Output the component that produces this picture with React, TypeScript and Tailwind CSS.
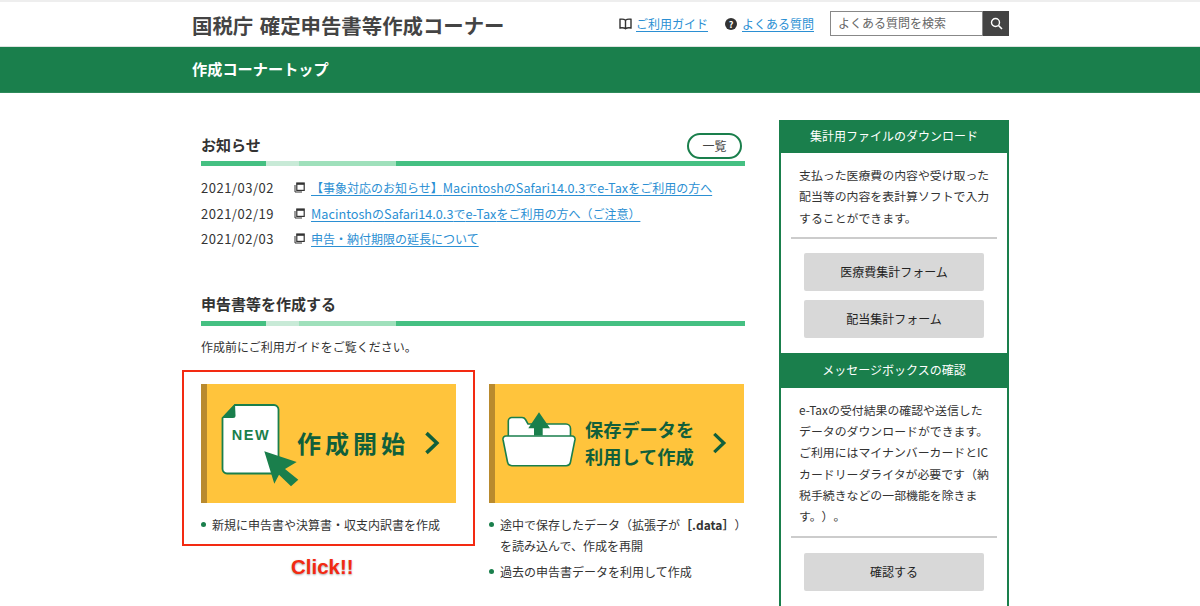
import React from "react";

const F = '"Noto Sans CJK JP", sans-serif';

function Bar() {
  return (
    <div className="flex h-[5px] w-[544px]">
      <div className="w-[65px] bg-[#45c082]" />
      <div className="w-[33px] bg-[#c8ead7]" />
      <div className="w-[97px] bg-[#9fe0bb]" />
      <div className="flex-1 bg-[#45c082]" />
    </div>
  );
}

function WinIcon() {
  return (
    <svg width="11" height="11" viewBox="0 0 11 11" className="shrink-0">
      <path d="M1 3v7h7" fill="none" stroke="#333" strokeWidth="1" />
      <rect x="2.8" y="1" width="7.4" height="7.4" fill="#fff" stroke="#333" strokeWidth="1.2" />
      <rect x="2.8" y="1" width="7.4" height="1.8" fill="#333" />
    </svg>
  );
}

function Lat({ children }: { children: React.ReactNode }) {
  return <span className="text-[12.7px]">{children}</span>;
}

function Notice({ date, children }: { date: string; children: React.ReactNode }) {
  return (
    <div className="flex h-[25.5px] items-center text-[12px] text-[#333]">
      <span className="w-[93px] text-[13px] tracking-[0.5px]">{date}</span>
      <WinIcon />
      <a className="ml-[6px] text-[#2b8fd3] underline underline-offset-2">{children}</a>
    </div>
  );
}

function Chevron({ h }: { h: number }) {
  return (
    <svg width={h * 0.66} height={h} viewBox="0 0 16 24" className="shrink-0">
      <path d="M2.5 2 L13 12 L2.5 22" fill="none" stroke="#115f3b" strokeWidth="3.6" />
    </svg>
  );
}

function Bullet({ children }: { children: React.ReactNode }) {
  return (
    <li className="relative flex text-[12px] leading-[21px] text-[#333]">
      <span className="mr-[6px] mt-[8px] h-[5px] w-[5px] shrink-0 rounded-full bg-[#1a7f4c]" />
      <span>{children}</span>
    </li>
  );
}

function GrayButton({ children }: { children: React.ReactNode }) {
  return (
    <div className="mx-auto flex h-[38px] w-[180px] items-center justify-center rounded-[2px] bg-[#d8d8d8] text-[12px] text-[#222]">
      {children}
    </div>
  );
}

export default function App() {
  return (
    <div className="relative h-[606px] w-[1200px] overflow-hidden bg-white [text-spacing-trim:space-all]" style={{ fontFamily: F }}>
      <div className="h-[2px] bg-[#eeeeee]" />
      <header className="flex h-[45px] items-center border-b border-[#dde3e0] pl-[192px]">
        <h1 className="mt-[2px] w-[427px] text-[20.4px] font-bold [word-spacing:2px] whitespace-nowrap text-[#444]">国税庁 確定申告書等作成コーナー</h1>
        <svg width="13" height="12" viewBox="0 0 13 12" className="mr-[4px]">
          <path d="M6.5 2.2C5 1 3 .9 1 1.3V10c2-.4 4-.3 5.5.8 1.5-1.1 3.5-1.2 5.5-.8V1.3C10 .9 8 1 6.5 2.2Z M6.5 2.2V10.8" fill="none" stroke="#333" strokeWidth="1.4" />
        </svg>
        <a className="w-[89px] text-[12px] text-[#2b8fd3] underline underline-offset-2">ご利用ガイド</a>
        <span className="mr-[5px] flex h-[12px] w-[12px] items-center justify-center rounded-full bg-[#333] text-[9px] leading-none font-bold text-white">?</span>
        <a className="w-[88px] text-[12px] text-[#2b8fd3] underline underline-offset-2">よくある質問</a>
        <div className="mt-[-2px] flex h-[25px] w-[179px]">
          <div className="flex w-[153px] items-center border border-[#888] pl-[7px] text-[12px] text-[#666]">よくある質問を検索</div>
          <div className="flex w-[26px] items-center justify-center bg-[#444]">
            <svg width="13" height="13" viewBox="0 0 13 13">
              <circle cx="5.5" cy="5.5" r="4" fill="none" stroke="#fff" strokeWidth="1.4" />
              <path d="M8.5 8.5 12 12" stroke="#fff" strokeWidth="1.6" />
            </svg>
          </div>
        </div>
      </header>
      <div className="flex h-[46px] items-center border-b border-[#2d8a5a] bg-[#1a7f4c] pb-[2px] pl-[192px] text-[15.2px] font-bold text-white">作成コーナートップ</div>

      <div className="flex items-start pl-[201px]">
        <main className="w-[544px] pt-[40px]">
          <div className="flex h-[25px] items-center justify-between pr-[3px]">
            <h2 className="text-[15px] font-bold text-[#333]">お知らせ</h2>
            <span className="flex h-[26px] w-[55px] items-center justify-center rounded-full border-2 border-[#1a7f4c] text-[12px] text-[#444]">一覧</span>
          </div>
          <div className="mt-[3px]"><Bar /></div>
          <div className="mt-[9px]">
            <Notice date="2021/03/02">【事象対応のお知らせ】<Lat>Macintosh</Lat>の<Lat>Safari14.0.3</Lat>で<Lat>e-Tax</Lat>をご利用の方へ</Notice>
            <Notice date="2021/02/19"><Lat>Macintosh</Lat>の<Lat>Safari14.0.3</Lat>で<Lat>e-Tax</Lat>をご利用の方へ（ご注意）</Notice>
            <Notice date="2021/02/03">申告・納付期限の延長について</Notice>
          </div>

          <div className="mt-[40px] flex h-[25px] items-center">
            <h2 className="text-[15px] font-bold text-[#333]">申告書等を作成する</h2>
          </div>
          <div className="mt-[4px]"><Bar /></div>
          <p className="mt-[11px] text-[12px] leading-[20px] text-[#333]">作成前にご利用ガイドをご覧ください。</p>

          <div className="mt-[27px] flex gap-[33px]">
            <div className="w-[255px]">
              <div className="flex h-[119px] items-center border-l-[6px] border-[#b98a2e] bg-[#ffc43c]">
                <svg width="90" height="90" viewBox="0 0 90 90" className="ml-[8px] shrink-0">
                  <path d="M20 7H59a4.5 4.5 0 0 1 4.5 4.5V71a4.5 4.5 0 0 1-4.5 4.5H12A4.5 4.5 0 0 1 7.5 71V20Z" fill="#fff" stroke="#1a7f4c" strokeWidth="1.8" />
                  <path d="M20 6 L7 20 H18 a2.5 2.5 0 0 0 2.5-2.5Z" fill="#1a7f4c" />
                  <text x="36" y="42" textAnchor="middle" fontSize="14.5" fontWeight="700" letterSpacing="1.5" fill="#1a7f4c" fontFamily='"Liberation Sans", sans-serif'>NEW</text>
                  <path d="M49.3 53.3 81.7 64 70 71 83.3 81.7 76 88.3 64 76.7 59.3 85.7Z" fill="#1a7f4c" />
                </svg>
                <span className="ml-[-8px] text-[24px] font-bold tracking-[4px] whitespace-nowrap text-[#115f3b]">作成開始</span>
                <span className="ml-[15px]"><Chevron h={24} /></span>
              </div>
              <ul className="mt-[11px]">
                <Bullet>新規に申告書や決算書・収支内訳書を作成</Bullet>
              </ul>
            </div>
            <div className="w-[255px]">
              <div className="flex h-[119px] items-center border-l-[6px] border-[#b98a2e] bg-[#ffc43c]">
                <svg width="80" height="60" viewBox="0 0 80 60" className="ml-[5px] mt-[-6px] shrink-0">
                  <path d="M8.3 30V11a3.5 3.5 0 0 1 3.5-3.5H22a4 4 0 0 1 3.5 2L28 14H66a4.5 4.5 0 0 1 4.5 4.5V30Z" fill="#fff" stroke="#1a7f4c" strokeWidth="1.6" />
                  <path d="M6 26H72a3 3 0 0 1 3 3.5L70.5 52a4.5 4.5 0 0 1-4.5 3.7H12A4.5 4.5 0 0 1 7.5 52L3 29.5A3 3 0 0 1 6 26Z" fill="#fff" stroke="#1a7f4c" strokeWidth="1.6" />
                  <path d="M39 2.3 50 18.3H42.700V25.500H34V18.300H28.300Z" fill="#1a7f4c" />
                </svg>
                <span className="ml-[5px] text-[18.2px] leading-[27px] font-bold whitespace-nowrap text-[#115f3b]">保存データを<br />利用して作成</span>
                <span className="ml-[18px]"><Chevron h={22} /></span>
              </div>
              <ul className="mt-[11px] flex flex-col gap-[5px]">
                <Bullet><span className="whitespace-nowrap">途中で保存したデータ（拡張子が<b className="font-bold">［.data］</b>）</span><br />を読み込んで、作成を再開</Bullet>
                <Bullet>過去の申告書データを利用して作成</Bullet>
              </ul>
            </div>
          </div>
        </main>

        <aside className="ml-[34px] mt-[27px] w-[230px] border-x-2 border-[#1a7f4c]">
          <div className="flex h-[33px] items-center justify-center bg-[#1a7f4c] pb-[2px] text-[12px] text-white">集計用ファイルのダウンロード</div>
          <p className="pt-[11px] pl-[18px] text-[11.9px] leading-[21.3px] whitespace-nowrap text-[#333]">支払った医療費の内容や受け取った<br />配当等の内容を表計算ソフトで入力<br />することができます。</p>
          <div className="mx-[10px] mt-[9px] h-[2px] bg-[#cccccc]" />
          <div className="mt-[14px] flex flex-col gap-[9px] pb-[15px]">
            <GrayButton>医療費集計フォーム</GrayButton>
            <GrayButton>配当集計フォーム</GrayButton>
          </div>
          <div className="flex h-[35px] items-center justify-center bg-[#1a7f4c] text-[12px] text-white">メッセージボックスの確認</div>
          <p className="pt-[11px] pl-[18px] text-[11.9px] leading-[21.3px] whitespace-nowrap text-[#333]">e-Taxの受付結果の確認や送信した<br />データのダウンロードができます。<br />ご利用にはマイナンバーカードとIC<br />カードリーダライタが必要です（納<br />税手続きなどの一部機能を除きま<br />す。）。</p>
          <div className="mx-[10px] mt-[9px] h-[2px] bg-[#cccccc]" />
          <div className="mt-[15px] pb-[15px]">
            <GrayButton>確認する</GrayButton>
          </div>
        </aside>
      </div>

      <div className="absolute top-[370px] left-[182px] h-[176px] w-[293px] border-[2.5px] border-[#f32a12]" />
      <span
        className="absolute top-[554px] left-[291px] text-[20.5px] leading-[26px] font-bold text-[#f32a12] [text-shadow:0_1px_2px_rgba(0,0,0,0.35),0_0_2px_#fff]"
        style={{ fontFamily: '"Liberation Sans", sans-serif' }}
      >
        Click!!
      </span>
    </div>
  );
}
